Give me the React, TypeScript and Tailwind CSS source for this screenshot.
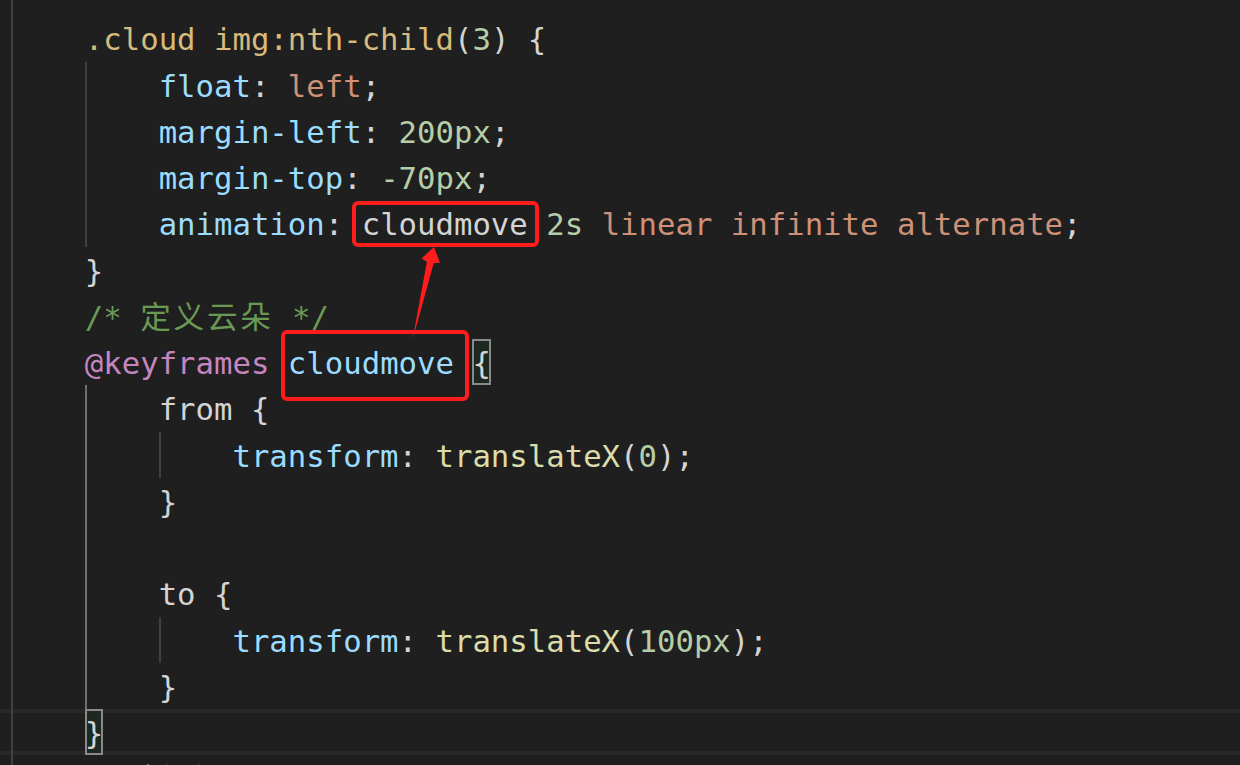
import React from 'react';

type Tok = [string, string];

const C = {
    sel: 'text-[#d7ba7d]',
    prop: 'text-[#9cdcfe]',
    str: 'text-[#ce9178]',
    num: 'text-[#b5cea8]',
    fn: 'text-[#dcdcaa]',
    kw: 'text-[#c586c0]',
    com: 'text-[#6a9955]',
    txt: 'text-[#d4d4d4]',
};

// one editor row; guides: 'n' = normal indent guide, 'a' = active one
const Line: React.FC<{ guides: string; toks?: Tok[]; current?: boolean; children?: React.ReactNode }> = ({ guides, toks = [], current, children }) => (
    <div
        className={`flex h-[46.25px] leading-[46.25px] whitespace-pre pl-[11px] ${current ? 'shadow-[inset_0_4px_0_#282828,inset_0_-4px_0_#282828]' : ''}`}
    >
        {guides.split('').map((g, i) => (
            <span
                key={i}
                className={`w-[4ch] shrink-0 border-l-2 ${g === 'a' ? 'border-[#6e6e6e]' : g === 'n' ? 'border-[#404040]' : 'border-transparent'}`}
            />
        ))}
        {toks.map(([t, c], i) => (
            <span key={i} className={`${c} relative top-[2px]`}>{t}</span>
        ))}
        {children}
    </div>
);

const Bracket: React.FC<{ ch: string }> = ({ ch }) => (
    <span className="w-[1ch] shrink-0 text-[#d4d4d4] bg-[#1c2820] shadow-[inset_0_0_0_2px_#8a8a8a]">
        <span className="relative top-[2px]">{ch}</span>
    </span>
);

export default function App() {
    return (
        <div className="relative w-[1240px] h-[765px] overflow-hidden bg-[#1f1f1f] font-['DejaVu_Sans_Mono','Noto_Sans_CJK_SC',monospace] text-[30.66px]">
            <div className="-mt-[31px]">
                <Line guides="n" />
                <Line guides="n" toks={[['.cloud img:nth-child', C.sel], ['(', C.txt], ['3', C.num], [')', C.txt], [' {', C.txt]]} />
                <Line guides="nn" toks={[['float', C.prop], [': ', C.txt], ['left', C.str], [';', C.txt]]} />
                <Line guides="nn" toks={[['margin-left', C.prop], [': ', C.txt], ['200px', C.num], [';', C.txt]]} />
                <Line guides="nn" toks={[['margin-top', C.prop], [': ', C.txt], ['-70px', C.num], [';', C.txt]]} />
                <Line
                    guides="nn"
                    toks={[['animation', C.prop], [': ', C.txt], ['cloudmove', C.txt], [' ', C.txt], ['2s', C.num], [' linear infinite alternate', C.str], [';', C.txt]]}
                />
                <Line guides="n" toks={[['}', C.txt]]} />
                <Line guides="n" toks={[['/* ', C.com], ['定义云朵', `${C.com} tracking-[2.7px]`], [' */', C.com]]} />
                <Line guides="n" toks={[['@keyframes', C.kw], [' ', C.txt], ['cloudmove', C.prop], [' ', C.txt]]}>
                    <Bracket ch="{" />
                </Line>
                <Line guides="na" toks={[['from', C.txt], [' {', C.txt]]} />
                <Line guides="nan" toks={[['transform', C.prop], [': ', C.txt], ['translateX', C.fn], ['(', C.txt], ['0', C.num], [');', C.txt]]} />
                <Line guides="na" toks={[['}', C.txt]]} />
                <Line guides="na" />
                <Line guides="na" toks={[['to', C.txt], [' {', C.txt]]} />
                <Line guides="nan" toks={[['transform', C.prop], [': ', C.txt], ['translateX', C.fn], ['(', C.txt], ['100px', C.num], [');', C.txt]]} />
                <Line guides="na" toks={[['}', C.txt]]} />
                <Line guides="n" current>
                    <Bracket ch="}" />
                </Line>
                <Line guides="n" toks={[['/* ', C.com], ['倒影', `${C.com} tracking-[2.7px]`], [' */', C.com]]} />
            </div>

            {/* red annotation boxes + arrow */}
            <svg className="absolute inset-0 pointer-events-none" width="1240" height="765" viewBox="0 0 1240 765">
                <rect x="354" y="203" width="183" height="42" rx="4" fill="none" stroke="#fe1c1c" strokeWidth="4" />
                <rect x="283" y="332" width="184" height="67" rx="4" fill="none" stroke="#fe1c1c" strokeWidth="4" />
                <polygon
                    points="412.5,340 426.9,261.7 421.6,258.4 434,247 440,262.8 433.7,263.3"
                    fill="#fe1c1c"
                />
            </svg>
        </div>
    );
}
